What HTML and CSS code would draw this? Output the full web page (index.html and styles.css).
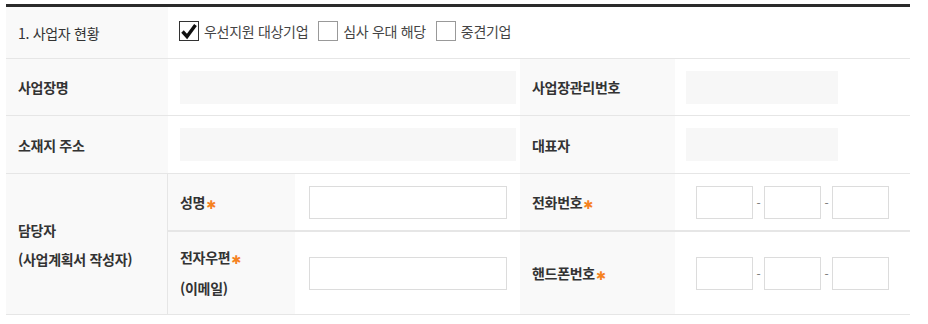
FILE: index.html
```html
<!DOCTYPE html>
<html lang="ko">
<head>
    <meta charset="UTF-8">
    <title>사업자 현황</title>
    <link rel="stylesheet" href="styles.css">
</head>
<body>
    <div class="wrap">
        <table class="form">
            <colgroup>
                <col class="c1"><col class="c2"><col class="c3"><col class="c4"><col class="c5">
            </colgroup>
            <tr class="r1">
                <th class="plain">1. 사업자 현황</th>
                <td colspan="4" class="checks">
                    <label class="chk"><span class="box on"><svg width="20" height="20" viewBox="0 0 20 20"><path d="M3.5 10.5 L8 15.5 L16.5 4" fill="none" stroke="#111" stroke-width="3.4" stroke-linejoin="miter"/></svg></span>우선지원 대상기업</label>
                    <label class="chk"><span class="box"></span>심사 우대 해당</label>
                    <label class="chk"><span class="box"></span>중견기업</label>
                </td>
            </tr>
            <tr class="r2">
                <th>사업장명</th>
                <td colspan="2" class="v-wide"><div class="field wide"></div></td>
                <th>사업장관리번호</th>
                <td class="v-right"><div class="field"></div></td>
            </tr>
            <tr class="r3">
                <th>소재지 주소</th>
                <td colspan="2" class="v-wide"><div class="field wide"></div></td>
                <th>대표자</th>
                <td class="v-right"><div class="field"></div></td>
            </tr>
            <tr class="r4">
                <th rowspan="2" class="group">담당자<br>(사업계획서 작성자)</th>
                <th>성명<span class="req">✱</span></th>
                <td class="v-input"><input type="text" class="text"></td>
                <th>전화번호<span class="req">✱</span></th>
                <td class="v-phone">
                    <div class="phone"><input type="text"><span class="dash">-</span><input type="text"><span class="dash">-</span><input type="text"></div>
                </td>
            </tr>
            <tr class="r5">
                <th class="two">전자우편<span class="req">✱</span><br>(이메일)</th>
                <td class="v-input"><input type="text" class="text"></td>
                <th>핸드폰번호<span class="req">✱</span></th>
                <td class="v-phone">
                    <div class="phone"><input type="text"><span class="dash">-</span><input type="text"><span class="dash">-</span><input type="text"></div>
                </td>
            </tr>
        </table>
    </div>
</body>
</html>
```

FILE: styles.css
```css
* { box-sizing: border-box; }
body { margin: 0; background: #fff; font-family: "Noto Sans CJK KR", "Noto Sans", sans-serif; font-size: 14px; color: #333; }
.wrap { padding: 4px 18px 0 6px; }
.form { width: 904px; border-collapse: separate; border-spacing: 0; border-top: 3px solid #2a2a2a; table-layout: fixed; }
.c1 { width: 162px; } .c2 { width: 127px; } .c3 { width: 225px; } .c4 { width: 155px; } .c5 { width: 235px; }
.form th, .form td { border-bottom: 1px solid #e6e6e6; vertical-align: middle; padding: 0; }
.form th { background: #f9f9f9; text-align: left; font-weight: 700; padding-left: 12px; color: #333; letter-spacing: -0.3px; }
.form th.plain { font-weight: 400; }
.r1 th, .r1 td { height: 52px; }
.r2 th, .r2 td { height: 57px; }
.r3 th, .r3 td { height: 58px; }
.r4 th, .r4 td { height: 58px; border-bottom-width: 2px; }
.r5 th, .r5 td { height: 83px; }
.form th.group { border-bottom-width: 1px; border-right: 1px solid #e6e6e6; line-height: 29px; padding-top: 2px; }
.form th.two { line-height: 28px; padding-bottom: 2px; }
.checks { padding-left: 11px !important; }
.chk { display: inline-flex; align-items: center; margin-right: 6px; color: #444; letter-spacing: -0.3px; }
.box { width: 20px; height: 20px; border: 1px solid #999; background: #fff; margin-right: 5px; display: inline-block; }
.box.on { border-color: #333; }
.box svg { display: block; margin: -1px; }
.field { height: 33px; background: #f7f7f7; width: 152px; }
.field.wide { width: 336px; }
.v-wide { padding-left: 12px !important; }
.v-right { padding-left: 11px !important; }
.v-input { padding-left: 14px !important; }
.v-phone { padding-left: 21px !important; }
input { font: inherit; border: 1px solid #dcdcdc; height: 33px; background: #fff; margin: 0; padding: 0 6px; outline: none; }
input.text { width: 198px; display: block; }
.phone { display: flex; align-items: center; }
.phone input { width: 57px; }
.dash { width: 11px; text-align: center; color: #777; font-size: 12px; }
.req { color: #f5821f; font-family: "DejaVu Sans", sans-serif; font-size: 12px; font-weight: 700; margin-left: 1px; vertical-align: -1px; }
```
